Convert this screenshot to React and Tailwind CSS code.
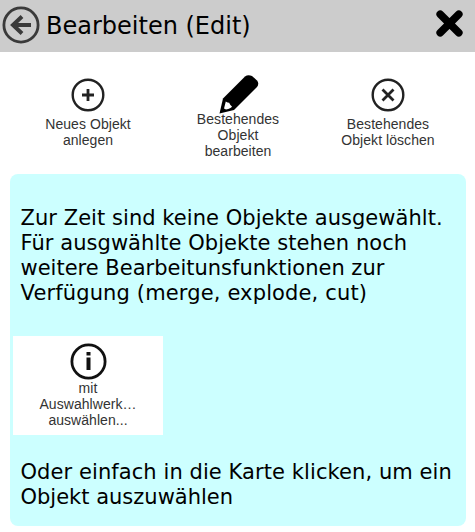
import React from 'react';

function CircleIcon({ size, stroke, color = '#222', className = '', children }) {
  return (
    <svg width={size} height={size} viewBox={`0 0 ${size} ${size}`} fill="none" stroke={color} className={`shrink-0 ${className}`}>
      <circle cx={size / 2} cy={size / 2} r={size / 2 - stroke / 2 - 0.5} strokeWidth={stroke} />
      {children}
    </svg>
  );
}

function Tile({ icon, lines, className }) {
  return (
    <button className={`flex w-[150px] flex-col items-center font-['Liberation_Sans',Arial,sans-serif] text-[14px] leading-[16px] tracking-[0.05px] text-[#333] ${className}`}>
      {icon}
      {lines.map((line) => (
        <span key={line} className="whitespace-nowrap">{line}</span>
      ))}
    </button>
  );
}

export default function App() {
  return (
    <div className="h-[532px] w-[475px] overflow-hidden bg-white font-['DejaVu_Sans',Verdana,sans-serif] text-black">
      <header className="flex h-[52px] items-center bg-[#ccc] pl-[2px] pr-[11px]">
        <CircleIcon size={38} stroke={2.8} color="#3a3a3a" className="-mt-[3px]">
          <path d="M29 19H10.500M20 10.500L11 19L20 27.500" strokeWidth="4" />
        </CircleIcon>
        <h1 className="ml-[6px] grow whitespace-nowrap text-[24px] leading-[30px]">Bearbeiten (Edit)</h1>
        <svg width="29" height="29" viewBox="0 0 29 29" className="-mt-[5px]" stroke="#000" strokeWidth="7.6" strokeLinecap="round">
          <path d="M5.2 5.2L23.8 23.8M23.8 5.2L5.2 23.8" />
        </svg>
      </header>

      <div className="flex h-[122px] pl-[13px]">
        <Tile
          className="pt-[26px]"
          lines={['Neues Objekt', 'anlegen']}
          icon={
            <CircleIcon size={34} stroke={2.4} className="mb-[4px]">
              <path d="M17 11V23M11 17H23" strokeWidth="2.8" />
            </CircleIcon>
          }
        />
        <Tile
          className="pt-[22px]"
          lines={['Bestehendes', 'Objekt', 'bearbeiten']}
          icon={
            <svg width="41" height="40" viewBox="0 0 41 40" className="-mb-[3px] shrink-0">
              <path d="M1.500 39.500L5 24.500L27 2.500Q30 .2 34 2L39 6.500Q41.500 9.500 39 13L16 36Z" fill="#000" />
              <path d="M6 34.500L7.800 27.500Q9.500 29 11 28.500Q12 31 14 32.500Q13 34.500 8 35.500Z" fill="#fff" />
            </svg>
          }
        />
        <Tile
          className="pt-[26px]"
          lines={['Bestehendes', 'Objekt löschen']}
          icon={
            <CircleIcon size={34} stroke={2.4} className="mb-[4px]">
              <path d="M11.500 11.500L22.500 22.500M22.500 11.500L11.500 22.500" strokeWidth="2.8" />
            </CircleIcon>
          }
        />
      </div>

      <section className="ml-[10px] h-[352px] w-[456px] rounded-[8px] bg-[#cff] pt-[32px] text-[21px] leading-[25px]">
        <p className="ml-[10.5px] flex flex-col whitespace-nowrap">
          <span className="tracking-[0.05px]">Zur Zeit sind keine Objekte ausgewählt.</span>
          <span className="tracking-[0.05px]">Für ausgwählte Objekte stehen noch</span>
          <span>weitere Bearbeitunsfunktionen zur</span>
          <span className="tracking-[0.14px]">Verfügung (merge, explode, cut)</span>
        </p>
        <div className="ml-[3px] mt-[30px] h-[99px] w-[150px] bg-white">
          <Tile
            className="pt-[7px]"
            lines={['mit', 'Auswahlwerk…', 'auswählen...']}
            icon={
              <CircleIcon size={37} stroke={2.8} color="#111">
                <path d="M18.500 14.500V27M18.500 9V12.500" strokeWidth="4" />
              </CircleIcon>
            }
          />
        </div>
        <p className="ml-[10.5px] mt-[25px] flex flex-col whitespace-nowrap">
          <span className="tracking-[0.08px]">Oder einfach in die Karte klicken, um ein</span>
          <span>Objekt auszuwählen</span>
        </p>
      </section>
    </div>
  );
}
